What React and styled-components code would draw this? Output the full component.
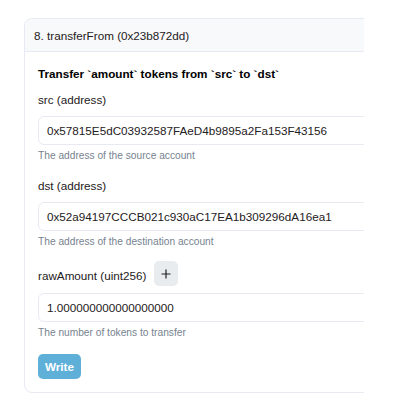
import React from 'react';
import styled, { createGlobalStyle } from 'styled-components';

const GlobalStyle = createGlobalStyle`
  html, body {
    margin: 0;
    padding: 0;
    background: #ffffff;
  }
  body {
    font-family: "Liberation Sans", Arial, sans-serif;
    font-size: 11.7px;
    color: #1e2022;
  }
  * {
    box-sizing: border-box;
  }
`;

const Page = styled.div`
  padding: 18px 0 0 24px;
`;

const Viewport = styled.div`
  width: 340px;
  overflow: hidden;
`;

const Card = styled.div`
  width: 430px;
  border: 1px solid #e7eaf3;
  border-radius: 8px;
  background: #ffffff;
`;

const CardHeader = styled.div`
  display: flex;
  align-items: center;
  height: 33px;
  padding: 0 9px;
  background: #f8f9fa;
  border-bottom: 1px solid #e7eaf3;
  border-radius: 8px 8px 0 0;
  font-size: 11.7px;
  color: #1e2022;
`;

const CardBody = styled.div`
  padding: 14px 13px 13px;
`;

const Title = styled.div`
  font-weight: bold;
  line-height: 16px;
  color: #000000;
  margin-bottom: 10px;
`;

const Group = styled.div`
  margin-bottom: ${p => p.$last ? '14px' : '15px'};
`;

const LabelRow = styled.div`
  display: flex;
  align-items: flex-end;
  gap: 7px;
  margin-top: -3px;
  margin-bottom: 7px;
`;

const Label = styled.div`
  line-height: 16px;
  margin-bottom: ${p => p.$inRow ? '0' : '8px'};
  padding-bottom: ${p => p.$inRow ? '2px' : '0'};
`;

const AddButton = styled.button`
  display: flex;
  align-items: center;
  justify-content: center;
  width: 24px;
  height: 25px;
  padding: 0;
  border: none;
  border-radius: 5px;
  background: #e9ecef;
  color: #1e2022;
`;

const Input = styled.input`
  display: block;
  width: 100%;
  height: 29px;
  padding: 0 8px;
  border: 1px solid #e7eaf3;
  border-radius: 6px;
  font-family: "Liberation Sans", Arial, sans-serif;
  font-size: 11.7px;
  color: #1e2022;
  background: #ffffff;
  outline: none;
`;

const Help = styled.div`
  margin-top: 4px;
  font-size: 10.2px;
  line-height: 14px;
  color: #77838f;
`;

const WriteButton = styled.button`
  height: 25px;
  padding: 0 7px;
  border: none;
  border-radius: 5px;
  background: #5eb0d9;
  color: #ffffff;
  font-family: "Liberation Sans", Arial, sans-serif;
  font-size: 11.7px;
  font-weight: bold;
`;

const PlusIcon = () => (
  <svg width="10" height="10" viewBox="0 0 10 10">
    <path d="M5 0.5v9M0.5 5h9" stroke="#1e2022" strokeWidth="1.2" fill="none" />
  </svg>
);

const fields = [
  {
    name: 'src (address)',
    value: '0x57815E5dC03932587FAeD4b9895a2Fa153F43156',
    help: 'The address of the source account',
  },
  {
    name: 'dst (address)',
    value: '0x52a94197CCCB021c930aC17EA1b309296dA16ea1',
    help: 'The address of the destination account',
  },
];

export default function App() {
  return (
    <Page>
      <GlobalStyle />
      <Viewport>
        <Card>
          <CardHeader>8. transferFrom (0x23b872dd)</CardHeader>
          <CardBody>
            <Title>Transfer `amount` tokens from `src` to `dst`</Title>
            {fields.map(f => (
              <Group key={f.name}>
                <Label>{f.name}</Label>
                <Input defaultValue={f.value} />
                <Help>{f.help}</Help>
              </Group>
            ))}
            <Group $last>
              <LabelRow>
                <Label $inRow>rawAmount (uint256)</Label>
                <AddButton type="button"><PlusIcon /></AddButton>
              </LabelRow>
              <Input defaultValue="1.000000000000000000" />
              <Help>The number of tokens to transfer</Help>
            </Group>
            <WriteButton type="button">Write</WriteButton>
          </CardBody>
        </Card>
      </Viewport>
    </Page>
  );
}
